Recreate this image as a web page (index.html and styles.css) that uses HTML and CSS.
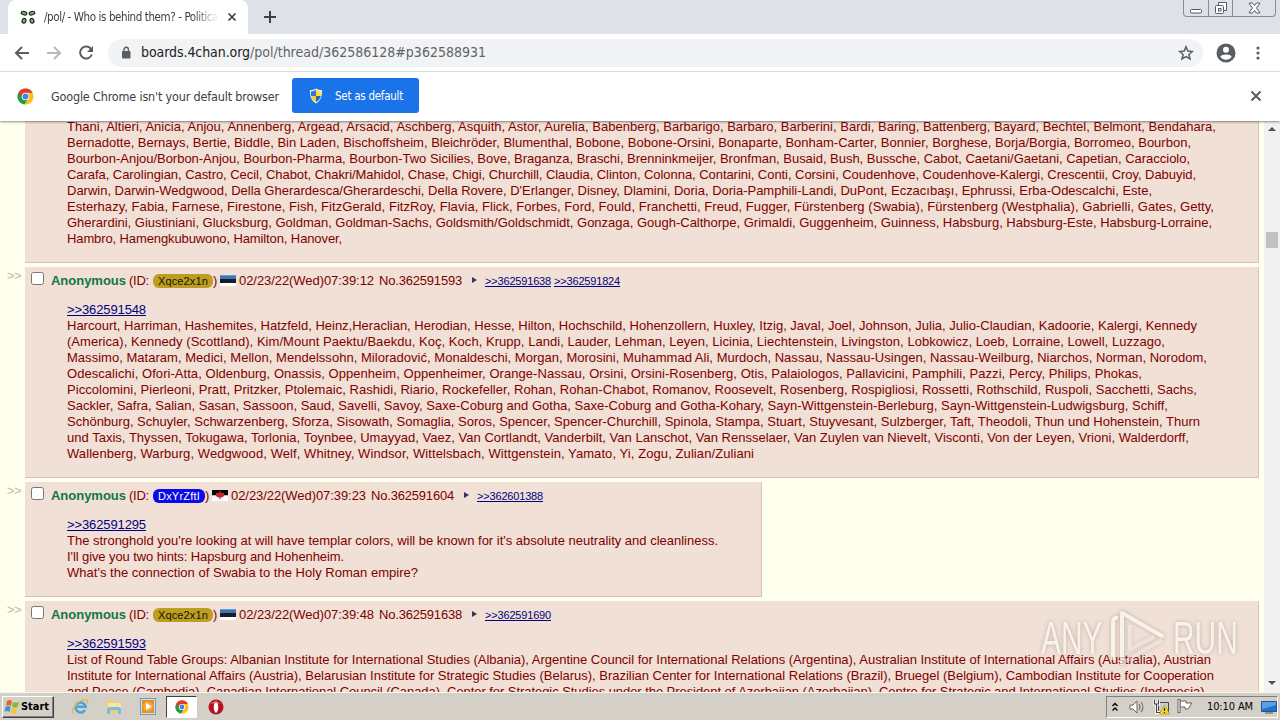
FILE: index.html
```html
<!DOCTYPE html>
<html lang="en">
<head>
<meta charset="utf-8">
<title>/pol/ - Who is behind them?</title>
<link rel="stylesheet" href="styles.css">
</head>
<body>
<svg class="defs" width="0" height="0">
  <symbol id="chrome" viewBox="0 0 18 18">
    <circle cx="9" cy="9" r="8.5" fill="#fbc116"/>
    <path d="M9 9 1.6 4.8A8.5 8.5 0 0 0 8 17.4L11 12z" fill="#1e9e50"/>
    <path d="M1.6 4.8A8.5 8.5 0 0 1 16.6 5H9L5.4 10.8z" fill="#e33b2e"/>
    <circle cx="9" cy="9" r="4" fill="#fff"/><circle cx="9" cy="9" r="3.1" fill="#3f83ee"/>
  </symbol>
  <symbol id="estonia" viewBox="0 0 16 11">
    <path fill="#3a75c4" d="M0 0h16v4H0z"/><path fill="#7297ca" d="M0 0h16v1H0z"/><path fill="#151d27" d="M0 4h16v4H0z"/><path fill="#fff" d="M0 8h16v3H0z"/>
  </symbol>
</svg>
<div class="tabs">
  <div class="tab">
    <svg width="16" height="16" viewBox="0 0 16 16"><g fill="#7fb069" stroke="#17250f" stroke-width="1.1"><ellipse cx="4" cy="4.200" rx="2.900" ry="1.700" transform="rotate(15 4 4.200)"/><ellipse cx="12" cy="4.200" rx="2.900" ry="1.700" transform="rotate(-15 12 4.200)"/><ellipse cx="4" cy="11.800" rx="1.900" ry="2.400" transform="rotate(20 4 11.800)"/><ellipse cx="12" cy="11.800" rx="1.900" ry="2.400" transform="rotate(-20 12 11.800)"/></g></svg>
    <span class="tab-title"><span data-w="174">/pol/ - Who is behind them? - Politica</span></span>
    <svg class="tab-x" width="10" height="10" viewBox="0 0 10 10"><path d="M1.500 1.500l7 7m0-7l-7 7" stroke="#3c4043" stroke-width="1.700"/></svg>
  </div>
  <svg class="newtab" width="14" height="14" viewBox="0 0 14 14"><path d="M7 1v12M1 7h12" stroke="#3c4043" stroke-width="2"/></svg>
  <div class="winbtns">
    <span><svg width="14" height="6" viewBox="0 0 14 6"><rect x="1.500" y="1.500" width="11" height="3.500" rx="1" fill="#fff" stroke="#555b66"/></svg></span>
    <span><svg width="14" height="14" viewBox="0 0 14 14"><path d="M4.500 4V1.500h8v8H10" fill="#fff" stroke="#555b66"/><rect x="1.500" y="4.500" width="8" height="8" rx="1" fill="#fff" stroke="#555b66"/><rect x="4.500" y="7.500" width="2.500" height="2.500" fill="none" stroke="#555b66"/></svg></span>
    <span class="wide"><svg width="13" height="12" viewBox="0 0 13 12"><path d="M1.500 1h3l2 2.500L8.500 1h3v1L8.500 6l3 4v1h-3l-2-2.500-2 2.500h-3v-1l3-4-3-4z" fill="#fff" stroke="#555b66"/></svg></span>
  </div>
</div>
<div class="toolbar">
  <svg class="back" width="16" height="16" viewBox="0 0 16 16"><path d="M15 8H2m6-6L2 8l6 6" fill="none" stroke="#5a5d61" stroke-width="2"/></svg>
  <svg class="fwd" width="16" height="16" viewBox="0 0 16 16"><path d="M1 8h13M8 2l6 6-6 6" fill="none" stroke="#b8babd" stroke-width="2"/></svg>
  <svg class="reload" width="16" height="16" viewBox="0 0 16 16"><path d="M13.300 4.500A6 6 0 1 0 13.800 9.500" fill="none" stroke="#5a5d61" stroke-width="2"/><path d="M15 1v6H9z" fill="#5a5d61"/></svg>
  <div class="omnibox">
    <svg width="10" height="14" viewBox="0 0 10 14"><rect x="1" y="5" width="8.500" height="7.500" rx="1" fill="#5a5d61"/><path d="M3 5.500V3.500a2.200 2.200 0 0 1 4.400 0v2" fill="none" stroke="#5a5d61" stroke-width="1.400"/></svg>
    <span class="url"><span class="host" data-w="109">boards.4chan.org</span><span data-w="236">/pol/thread/362586128#p362588931</span></span>
    <svg class="star" width="16" height="16" viewBox="0 0 16 16"><path d="M8 1.800l1.800 4.300 4.600.4-3.500 3 1.100 4.500L8 11.600 4 14l1.100-4.500-3.500-3 4.600-.4z" fill="none" stroke="#5a5d61" stroke-width="1.500"/></svg>
  </div>
  <svg class="avatar" width="20" height="20" viewBox="0 0 20 20"><circle cx="10" cy="10" r="9.500" fill="#5a5d61"/><circle cx="10" cy="6.800" r="3" fill="#fff"/><path d="M4.300 13.800c1.300-3 10.100-3 11.400 0-2.500 3.800-8.900 3.800-11.400 0z" fill="#fff"/></svg>
  <svg class="dots" width="4" height="16" viewBox="0 0 4 16"><g fill="#5a5d61"><circle cx="2" cy="3" r="1.600"/><circle cx="2" cy="8" r="1.600"/><circle cx="2" cy="13" r="1.600"/></g></svg>
</div>
<div class="infobar">
  <svg class="logo" width="17" height="17"><use href="#chrome"/></svg>
  <span class="info" data-w="228">Google Chrome isn't your default browser</span>
  <div class="setdefault">
    <svg width="16" height="16" viewBox="0 0 16 16"><path d="M8 .5c2 1.300 4 1.600 6 1.600.6 6-1.500 11-6 13.400C3.500 13.100 1.400 8.100 2 2.100c2 0 4-.3 6-1.600z" fill="#e5ebef"/><path d="M8 2v6H3.100C2.700 6.500 2.700 5 3 3.400 5 3.300 6.500 2.900 8 2z" fill="#2d79d5"/><path d="M8 2c1.500.9 3 1.300 5 1.400.3 1.600.3 3.100-.1 4.600H8z" fill="#ffdc37"/><path d="M3.100 8H8v6.100C5.500 12.700 3.800 10.500 3.100 8z" fill="#f7cd27"/><path d="M8 8h4.900c-.7 2.500-2.400 4.700-4.900 6.100z" fill="#2468bd"/></svg>
    <span data-w="68">Set as default</span>
  </div>
  <svg class="infox" width="12" height="12" viewBox="0 0 12 12"><path d="M1.500 1.500l9 9m0-9l-9 9" stroke="#5a5d61" stroke-width="2"/></svg>
</div>
<div class="view">
  <div class="board">
    <div class="row first"><div class="side"></div>
      <div class="post"><div class="msg">
        <p data-w="1149">Thani, Altieri, Anicia, Anjou, Annenberg, Argead, Arsacid, Aschberg, Asquith, Astor, Aurelia, Babenberg, Barbarigo, Barbaro, Barberini, Bardi, Baring, Battenberg, Bayard, Bechtel, Belmont, Bendahara,</p>
        <p data-w="1124">Bernadotte, Bernays, Bertie, Biddle, Bin Laden, Bischoffsheim, Bleichröder, Blumenthal, Bobone, Bobone-Orsini, Bonaparte, Bonham-Carter, Bonnier, Borghese, Borja/Borgia, Borromeo, Bourbon,</p>
        <p data-w="1123">Bourbon-Anjou/Borbon-Anjou, Bourbon-Pharma, Bourbon-Two Sicilies, Bove, Braganza, Braschi, Brenninkmeijer, Bronfman, Busaid, Bush, Bussche, Cabot, Caetani/Gaetani, Capetian, Caracciolo,</p>
        <p data-w="1129">Carafa, Carolingian, Castro, Cecil, Chabot, Chakri/Mahidol, Chase, Chigi, Churchill, Claudia, Clinton, Colonna, Contarini, Conti, Corsini, Coudenhove, Coudenhove-Kalergi, Crescentii, Croy, Dabuyid,</p>
        <p data-w="1085">Darwin, Darwin-Wedgwood, Della Gherardesca/Gherardeschi, Della Rovere, D'Erlanger, Disney, Dlamini, Doria, Doria-Pamphili-Landi, DuPont, Eczacıbaşı, Ephrussi, Erba-Odescalchi, Este,</p>
        <p data-w="1147">Esterhazy, Fabia, Farnese, Firestone, Fish, FitzGerald, FitzRoy, Flavia, Flick, Forbes, Ford, Fould, Franchetti, Freud, Fugger, Fürstenberg (Swabia), Fürstenberg (Westphalia), Gabrielli, Gates, Getty,</p>
        <p data-w="1145">Gherardini, Giustiniani, Glucksburg, Goldman, Goldman-Sachs, Goldsmith/Goldschmidt, Gonzaga, Gough-Calthorpe, Grimaldi, Guggenheim, Guinness, Habsburg, Habsburg-Este, Habsburg-Lorraine,</p>
        <p data-w="275">Hambro, Hamengkubuwono, Hamilton, Hanover,</p>
      </div></div>
    </div>
    <div class="row"><div class="side"><span data-w="14">&gt;&gt;</span></div>
      <div class="post">
        <div class="head"><i class="check"></i><b data-w="75">Anonymous</b><span class="id" data-w="20">(ID:</span><span class="badge gold"><span data-w="50">Xqce2x1n</span></span><span class="paren" data-w="4">)</span><svg class="flag" width="16" height="11"><use href="#estonia"/></svg><span class="date" data-w="135">02/23/22(Wed)07:39:12</span><span class="no" data-w="83">No.362591593</span><i class="arrow"></i><a data-w="66">&gt;&gt;362591638</a><a data-w="66">&gt;&gt;362591824</a></div>
        <div class="msg">
        <p><a data-w="79">&gt;&gt;362591548</a></p>
        <p data-w="1130">Harcourt, Harriman, Hashemites, Hatzfeld, Heinz,Heraclian, Herodian, Hesse, Hilton, Hochschild, Hohenzollern, Huxley, Itzig, Javal, Joel, Johnson, Julia, Julio-Claudian, Kadoorie, Kalergi, Kennedy</p>
        <p data-w="1098">(America), Kennedy (Scottland), Kim/Mount Paektu/Baekdu, Koç, Koch, Krupp, Landi, Lauder, Lehman, Leyen, Licinia, Liechtenstein, Livingston, Lobkowicz, Loeb, Lorraine, Lowell, Luzzago,</p>
        <p data-w="1140">Massimo, Mataram, Medici, Mellon, Mendelssohn, Miloradović, Monaldeschi, Morgan, Morosini, Muhammad Ali, Murdoch, Nassau, Nassau-Usingen, Nassau-Weilburg, Niarchos, Norman, Norodom,</p>
        <p data-w="1075">Odescalichi, Ofori-Atta, Oldenburg, Onassis, Oppenheim, Oppenheimer, Orange-Nassau, Orsini, Orsini-Rosenberg, Otis, Palaiologos, Pallavicini, Pamphili, Pazzi, Percy, Philips, Phokas,</p>
        <p data-w="1130">Piccolomini, Pierleoni, Pratt, Pritzker, Ptolemaic, Rashidi, Riario, Rockefeller, Rohan, Rohan-Chabot, Romanov, Roosevelt, Rosenberg, Rospigliosi, Rossetti, Rothschild, Ruspoli, Sacchetti, Sachs,</p>
        <p data-w="1101">Sackler, Safra, Salian, Sasan, Sassoon, Saud, Savelli, Savoy, Saxe-Coburg and Gotha, Saxe-Coburg and Gotha-Kohary, Sayn-Wittgenstein-Berleburg, Sayn-Wittgenstein-Ludwigsburg, Schiff,</p>
        <p data-w="1133">Schönburg, Schuyler, Schwarzenberg, Sforza, Sisowath, Somaglia, Soros, Spencer, Spencer-Churchill, Spinola, Stampa, Stuart, Stuyvesant, Sulzberger, Taft, Theodoli, Thun und Hohenstein, Thurn</p>
        <p data-w="1122">und Taxis, Thyssen, Tokugawa, Torlonia, Toynbee, Umayyad, Vaez, Van Cortlandt, Vanderbilt, Van Lanschot, Van Rensselaer, Van Zuylen van Nievelt, Visconti, Von der Leyen, Vrioni, Walderdorff,</p>
        <p data-w="687">Wallenberg, Warburg, Wedgwood, Welf, Whitney, Windsor, Wittelsbach, Wittgenstein, Yamato, Yi, Zogu, Zulian/Zuliani</p>
      </div></div>
    </div>
    <div class="row"><div class="side"><span data-w="14">&gt;&gt;</span></div>
      <div class="post short">
        <div class="head"><i class="check"></i><b data-w="75">Anonymous</b><span class="id" data-w="20">(ID:</span><span class="badge blue"><span data-w="42">DxYrZftI</span></span><span class="paren" data-w="4">)</span><svg class="flag" width="16" height="11" viewBox="0 0 16 11"><path fill="#080808" d="M0 0h16v5.500H0z"/><path fill="#fff" d="M0 5.500h16V11H0z"/><path d="M8 .5l1.200 2.500L12 3v3l-2 1.500H8.500v2h-1v-2H6L4 6V3l2.800 0z" fill="#c9262b"/></svg><span class="date" data-w="135">02/23/22(Wed)07:39:23</span><span class="no" data-w="83">No.362591604</span><i class="arrow"></i><a data-w="66">&gt;&gt;362601388</a></div>
        <div class="msg">
        <p><a data-w="79">&gt;&gt;362591295</a></p>
        <p data-w="651">The stronghold you're looking at will have templar colors, will be known for it's absolute neutrality and cleanliness.</p>
        <p data-w="277">I'll give you two hints: Hapsburg and Hohenheim.</p>
        <p data-w="351">What's the connection of Swabia to the Holy Roman empire?</p>
      </div></div>
    </div>
    <div class="row"><div class="side"><span data-w="14">&gt;&gt;</span></div>
      <div class="post">
        <div class="head"><i class="check"></i><b data-w="75">Anonymous</b><span class="id" data-w="20">(ID:</span><span class="badge gold"><span data-w="50">Xqce2x1n</span></span><span class="paren" data-w="4">)</span><svg class="flag" width="16" height="11"><use href="#estonia"/></svg><span class="date" data-w="135">02/23/22(Wed)07:39:48</span><span class="no" data-w="83">No.362591638</span><i class="arrow"></i><a data-w="66">&gt;&gt;362591690</a></div>
        <div class="msg">
        <p><a data-w="79">&gt;&gt;362591593</a></p>
        <p data-w="1144">List of Round Table Groups: Albanian Institute for International Studies (Albania), Argentine Council for International Relations (Argentina), Australian Institute of International Affairs (Australia), Austrian</p>
        <p data-w="1147">Institute for International Affairs (Austria), Belarusian Institute for Strategic Studies (Belarus), Brazilian Center for International Relations (Brazil), Bruegel (Belgium), Cambodian Institute for Cooperation</p>
        <p data-w="1141">and Peace (Cambodia), Canadian International Council (Canada), Center for Strategic Studies under the President of Azerbaijan (Azerbaijan), Centre for Strategic and International Studies (Indonesia),</p>
      </div></div>
    </div>
  </div>
  <div class="scroll"><i class="up"></i><i class="thumb"></i><i class="down"></i></div>
  <div class="mark">
    <span class="word">ANY</span>
    <svg width="56" height="58" viewBox="0 0 56 58"><path d="M3 51V13Q3 8 8 9" fill="none" stroke="#fff" stroke-width="4"/><path d="M12 54V4l40 23" fill="none" stroke="#fff" stroke-width="4" stroke-linejoin="round" stroke-linecap="round"/><path d="M12 54l40-23M20 16v24l24-12" fill="none" stroke="#fff" stroke-opacity=".6" stroke-width="4" stroke-linejoin="round"/></svg>
    <span class="word">RUN</span>
  </div>
</div>
<div class="taskbar">
  <div class="start"><svg width="18" height="16" viewBox="0 0 18 16"><path d="M4 2q3-2 5 0L8 7Q5 5 3 7z" fill="#e8642b"/><path d="M10 3q3 1.500 6 0l-1.500 5q-3 1.500-5.500-.5z" fill="#82b93c"/><path d="M2.500 8q3-2 5 0l-1 5q-3-2-5 0z" fill="#3f8fda"/><path d="M8.500 8.800q3 1.500 5.500.3l-1.500 5q-3 1-5-.5z" fill="#f8c32c"/></svg><b data-w="28">Start</b></div>
  <svg class="ie" width="18" height="18" viewBox="0 0 18 18"><path d="M14 12a5 5 0 1 1 .6-3.200H5" fill="none" stroke="#45a5df" stroke-width="2.600"/><path d="M2 15.500C-1 11 10-.5 16 2.500c1 .6.8 2 .2 3" fill="none" stroke="#e5b53c" stroke-width="1.300"/></svg>
  <svg class="folder" width="18" height="18" viewBox="0 0 18 18"><path d="M2 2h5l1 2h7v11H2z" fill="#edcf70"/><path d="M3 5h13v5H3z" fill="#f8e6a3"/><path d="M2 16v-4q0-3 3-3h8q3 0 3 3v4h-3v-4H5v4z" fill="#78bde2"/></svg>
  <svg class="media" width="16" height="17" viewBox="0 0 16 17"><rect x=".5" y=".5" width="15" height="16" fill="#c7e2f4" stroke="#6d9fc3"/><rect x="2" y="2" width="12" height="13" fill="#f18b1c"/><circle cx="8" cy="8.500" r="5" fill="#f9a934"/><path d="M6 5l6 3.500L6 12z" fill="#fff"/></svg>
  <div class="active"><svg width="14" height="14"><use href="#chrome"/></svg></div>
  <svg class="opera" width="16" height="16" viewBox="0 0 16 16"><circle cx="8" cy="8" r="7.500" fill="#b81420"/><ellipse cx="8" cy="8" rx="2.200" ry="5.700" fill="#fff"/><path d="M2 5q5-5 11 0Q8 3 2 5z" fill="#e67073"/></svg>
  <div class="tray">
    <svg width="8" height="12" viewBox="0 0 8 12"><path d="M1.500 5L4 2.500 6.500 5M1.500 9.500L4 7l2.500 2.500" fill="none" stroke="#000" stroke-width="1.400"/></svg>
    <svg class="vol" width="17" height="14" viewBox="0 0 17 14"><path d="M1 5h3l4-4v12L4 9H1z" fill="#fff" stroke="#666"/><path d="M10 4q2 3 0 6m2-8q4 5 0 10" fill="none" stroke="#777" stroke-width="1.200"/></svg>
    <svg class="net" width="17" height="16" viewBox="0 0 17 16"><path d="M5.500 3.500h10v9h-10z" fill="#c9ccd0" stroke="#444"/><path d="M1.500 1v4h4V1M3.500 5v8.500h4" fill="none" stroke="#fff" stroke-width="3"/><path d="M1.500 1v4h4V1M3.500 5v8.500h4" fill="none" stroke="#444" stroke-width="1.200"/><path d="M11.500 6l5 9h-10z" fill="#ffd829" stroke="#a68a00" stroke-width=".6"/><path d="M11.500 9v3m0 1v1" stroke="#222" stroke-width="1.200"/></svg>
    <svg class="wf" width="17" height="15" viewBox="0 0 17 15"><path d="M3 2h6v2h6l-2 3-2 3H8V8H3z" fill="#fff" stroke="#666"/><path d="M2 0v14" stroke="#666" stroke-width="3"/><path d="M2 1v12" stroke="#fff"/></svg>
    <span class="clock" data-w="46">10:10 AM</span>
    <svg class="desk" width="16" height="14" viewBox="0 0 16 14"><path d="M.5 1.500h15v10H.5z" fill="#2472cf" stroke="#275390"/><path d="M1 2h14v3L1 9z" fill="#5aa0e6"/><path d="M4 13h8" stroke="#555"/></svg>
  </div>
</div>
<script src="fit.js"></script>
</body>
</html>
```

FILE: styles.css
```css
* { box-sizing: border-box; }
body { margin: 0; width: 1280px; height: 720px; overflow: hidden; display: flex; flex-direction: column; font-family: "DejaVu Sans Condensed", "DejaVu Sans", sans-serif; font-size: 12px; background: #fff; }
svg { display: block; flex: none; }
.defs { position: absolute; }
[data-w] { white-space: pre; }

.tabs { height: 34px; flex: none; background: #dee1e8; display: flex; align-items: flex-start; padding-left: 8px; }
.tab { width: 240px; height: 34px; background: #fff; border-radius: 8px 8px 0 0; display: flex; align-items: center; padding-left: 12px; }
.tab-title { width: 175px; margin-left: 8px; overflow: hidden; color: #3c4043; font-size: 11.5px; -webkit-mask-image: linear-gradient(90deg, #000 85%, transparent); mask-image: linear-gradient(90deg, #000 85%, transparent); }
.tab-x { margin-left: 8px; }
.newtab { margin: 10px 0 0 15px; }
.winbtns { display: flex; margin-left: auto; margin-right: 4px; width: 93px; height: 17px; border: 1px solid #858c9b; border-top: 0; border-radius: 0 0 4px 4px; }
.winbtns span { width: 25px; display: flex; align-items: center; justify-content: center; border-right: 1px solid #858c9b; }
.winbtns span:first-child { align-items: flex-end; padding-bottom: 2px; }
.winbtns .wide { width: 42px; border: 0; }

.toolbar { height: 38px; flex: none; border-bottom: 1px solid #dadce0; display: flex; align-items: center; background: #fff; }
.back { margin-left: 14px; }
.fwd { margin-left: 16px; }
.reload { margin-left: 16px; }
.omnibox { margin-left: 14px; width: 1095px; height: 28px; border-radius: 14px; background: #f1f3f4; display: flex; align-items: center; padding-left: 13px; }
.url { margin-left: 10px; margin-top: -1px; display: flex; font-size: 14px; color: #5f6368; }
.host { color: #202124; }
.star { margin-left: auto; margin-right: 9px; }
.avatar { margin-left: 13px; }
.dots { margin-left: 20px; }

.infobar { height: 49px; flex: none; display: flex; align-items: center; background: #fff; position: relative; z-index: 2; box-shadow: 0 0 3px rgba(0,0,0,.8); padding-bottom: 1px; clip-path: inset(0 0 -6px 0); }
.logo { margin-left: 17px; }
.info { margin-left: 17px; font-size: 12.500px; color: #3c4043; width: 228px; }
.setdefault { margin-left: 13px; width: 127px; height: 35px; background: #1a73e8; border-radius: 3px; color: #fff; font-size: 11.500px; display: flex; align-items: center; padding-left: 16px; gap: 11px; margin-bottom: 1px; }
.infox { margin-left: auto; margin-right: 18px; }

.view { height: 571px; flex: none; display: flex; position: relative; overflow: hidden; background: #ffffee; }
.board { flex: 1; font: 13px/16px "Liberation Sans", Arial, sans-serif; color: #800000; }
.row { display: flex; margin-bottom: 4px; }
.side { width: 25px; padding: 1px 0 0 7px; color: #c9b7a7; flex: none; }
.post { width: 1234px; background: #f0e0d6; border: 1px solid #d9bfb7; border-top: 0; border-left: 0; padding-bottom: 15px; }
.first .post { margin-top: -2px; }
.short { width: 737px; }
.head { height: 35px; display: flex; align-items: flex-start; padding: 6px 0 0 6px; }
.check { width: 13px; height: 13px; background: #fff; border: 1px solid #767676; border-radius: 2.500px; margin-right: 7px; flex: none; margin-top: -1px; }
.head b { color: #117743; }
.id { margin-left: 3px; }
.badge { margin: 1px 0 0 4px; height: 14px; line-height: 14px; padding: 0 5px; border-radius: 6px; font-size: 11px; }
.gold { background: #bc9e20; color: #1a1200; }
.blue { background: #0b0bea; color: #fff; }
.paren { margin-left: 0; }
.flag { margin: 2px 3px 0 3px; }
.no { margin-left: 5px; }
.arrow { margin: 4px 8px 0 10px; border-left: 5px solid #34345c; border-top: 3px solid transparent; border-bottom: 3px solid transparent; }
.head a { font-size: 11px; margin-right: 3px; }
a { color: #000080; text-decoration: underline; }
.msg { padding-left: 42px; }
.msg p { margin: 0; height: 16px; width: max-content; }

.scroll { width: 16px; background: #f1f1f1; flex: none; display: flex; flex-direction: column; align-items: center; }
.up, .down { border: 4px solid transparent; }
.up { border-top: 0; border-bottom-color: #505050; margin-top: 6px; }
.down { border-bottom: 0; border-top-color: #505050; margin: auto 0 7px; }
.thumb { width: 12px; height: 16px; background: #c1c1c1; margin-top: 101px; }
.mark { position: absolute; left: 1041px; top: 488px; display: flex; align-items: center; gap: 7px; color: #fff; opacity: .58; font: 46px/58px "Liberation Sans", sans-serif; filter: drop-shadow(0 0 2px rgba(90,60,50,.55)); }
.word { width: 62px; transform: scaleX(.65); transform-origin: left; }

.taskbar { height: 28px; flex: none; background: #d4d0c8; border-top: 1px solid #f7f5f0; display: flex; align-items: center; color: #000; position: relative; z-index: 2; }
.start { margin-left: 2px; width: 52px; height: 22px; border: 1px solid; border-color: #fff #404040 #404040 #fff; box-shadow: inset -1px -1px #808080; display: flex; align-items: center; gap: 0; font-size: 11px; }
.ie { margin-left: 17px; }
.folder { margin-left: 16px; }
.media { margin-left: 17px; }
.active { margin-left: 10px; width: 31px; height: 22px; background: #fff; border: 1px solid; border-color: #404040 #fff #fff #404040; display: flex; align-items: center; justify-content: center; }
.opera { margin-left: 11px; }
.tray { margin-left: auto; margin-right: 2px; width: 172px; height: 22px; border: 1px solid; border-color: #808080 #fff #fff #808080; display: flex; align-items: center; padding-left: 4px; font-size: 11px; }
.vol { margin-left: 10px; }
.net { margin-left: 7px; }
.wf { margin-left: 7px; }
.clock { margin-left: 13px; width: 46px; }
.desk { margin-left: 8px; }
```

FILE: fit.js
```js
// Spread each run of text over its measure with letter spacing.
document.querySelectorAll('[data-w]').forEach(function (el) {
  var target = Number(el.dataset.w);
  var range = document.createRange();
  range.selectNodeContents(el);
  var natural = range.getBoundingClientRect().width;
  el.style.letterSpacing = (target - natural) / el.textContent.length + 'px';
});
```
